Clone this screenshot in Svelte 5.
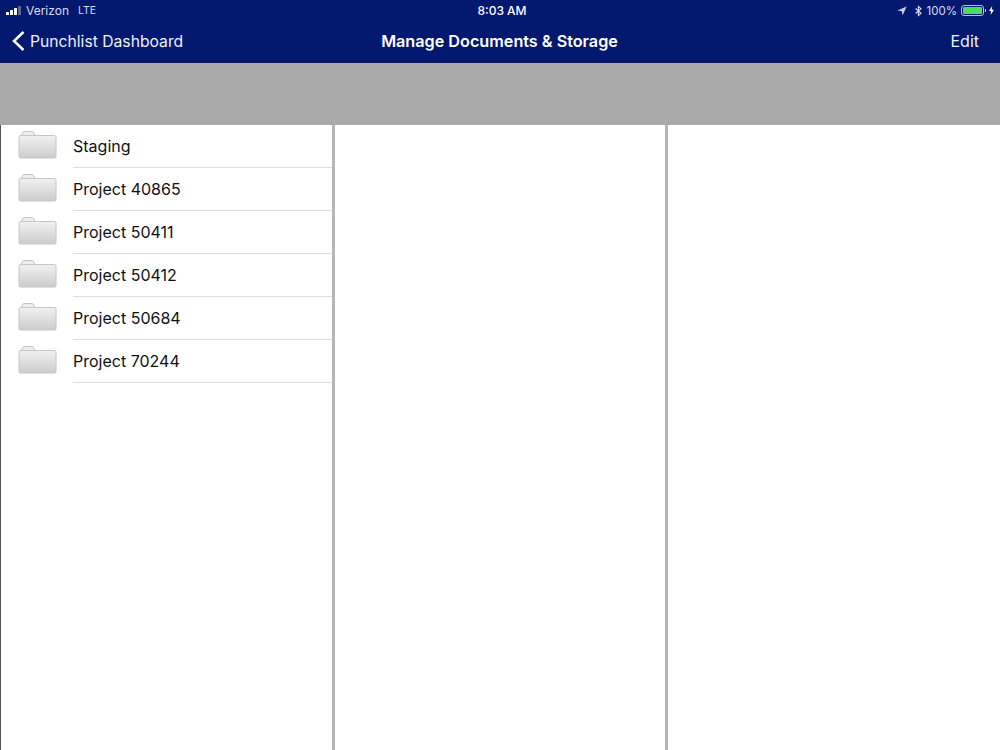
<script>
	const folders = ['Staging', 'Project 40865', 'Project 50411', 'Project 50412', 'Project 50684', 'Project 70244'];
</script>

<div class="screen">
	<header class="top">
		<div class="status">
			<div class="status-left">
				<span class="signal"><i class="b1"></i><i class="b2"></i><i class="b3"></i><i class="b4"></i></span>
				<span>Verizon</span>
				<span class="lte">LTE</span>
			</div>
			<div class="clock">8:03 AM</div>
			<div class="status-right">
				<svg width="10" height="10" viewBox="0 0 10 10"><path d="M9.6 .4 L.4 4.4 L4.8 5.2 L5.6 9.6 Z" fill="#c9cee6" /></svg>
				<svg class="bt" width="7" height="12" viewBox="0 0 7 11"><path d="M.6 3 L6 7.8 L3.4 10 V1 L6 3.2 L.6 8" fill="none" stroke="#d8dcf0" stroke-width="1.1" /></svg>
				<span class="pct">100%</span>
				<span class="battery"><span class="fill"></span></span>
				<span class="nub"></span>
				<svg class="bolt" width="5" height="9" viewBox="0 0 5 9"><path d="M3.2 0 L0 5 H2 L1.6 9 L5 3.8 H2.8 Z" fill="#fff" /></svg>
			</div>
		</div>
		<nav class="nav">
			<a class="back" href="#back">
				<svg width="14" height="22" viewBox="0 0 14 22"><path d="M12.5 2 L3 11 L12.5 20" fill="none" stroke="#fff" stroke-width="2.5" /></svg>
				<span class="back-label">Punchlist Dashboard</span>
			</a>
			<h1>Manage Documents &amp; Storage</h1>
			<a class="edit" href="#edit">Edit</a>
		</nav>
	</header>

	<div class="band"></div>

	<div class="columns">
		<ul class="col list">
			{#each folders as name}
				<li>
					<svg class="folder" width="40" height="30" viewBox="0 0 40 30">
						<defs>
							<linearGradient id="fg" x1="0" y1="0" x2="0" y2="1">
								<stop offset="0" stop-color="#f1f1f1" />
								<stop offset="1" stop-color="#cccccc" />
							</linearGradient>
						</defs>
						<path d="M2.5 6.5 L5 2 Q5.4 1.5 6 1.5 H14 Q14.8 1.5 15.2 2 L17.5 6.5" fill="#ededed" stroke="#c6c6c6" />
						<rect x="1" y="5.5" width="37" height="22.5" rx="1.5" fill="url(#fg)" stroke="#c6c6c6" />
					</svg>
					<span class="label">{name}</span>
				</li>
			{/each}
		</ul>
		<div class="col"></div>
		<div class="col"></div>
	</div>
</div>

<style>
	:global(body) {
		margin: 0;
		background: #fff;
	}

	.screen {
		width: 1000px;
		height: 750px;
		overflow: hidden;
		display: flex;
		flex-direction: column;
		font-family: Inter, 'Liberation Sans', sans-serif;
		color: #111;
	}

	.top {
		height: 63px;
		background: #03186f;
		color: #fff;
		border-bottom: 1px solid #0a1c5c;
		box-sizing: border-box;
	}

	.status {
		height: 21px;
		display: grid;
		grid-template-columns: 1fr auto 1fr;
		align-items: center;
		font-size: 12px;
		color: #d8dcf0;
		padding: 0 6px;
	}

	.status-left {
		display: flex;
		align-items: center;
		gap: 5px;
	}

	.lte {
		margin-left: 4px;
		font-size: 10.5px;
	}

	.signal {
		display: flex;
		align-items: flex-end;
		gap: 1px;
		height: 9px;
	}

	.signal i {
		width: 3px;
		background: #fff;
		border-radius: 0.5px;
	}

	.b1 { height: 3px; }
	.b2 { height: 5px; }
	.b3 { height: 7px; }
	.signal .b4 { height: 9px; background: #5a6699; }

	.clock {
		margin-left: 4px;
		color: #fff;
		font-weight: 500;
	}

	.status-right {
		display: flex;
		align-items: center;
		justify-content: flex-end;
	}

	.bt {
		margin-left: 8px;
	}

	.pct {
		margin-left: 5px;
		font-size: 11.5px;
	}

	.battery {
		width: 23px;
		height: 11px;
		margin-left: 4px;
		padding: 1px;
		border: 1px solid #b9c0dc;
		border-radius: 3px;
		display: flex;
		box-sizing: border-box;
	}

	.fill {
		flex: 1;
		background: #4cd964;
		border-radius: 1px;
	}

	.nub {
		width: 1px;
		height: 3px;
		margin-left: 1px;
		background: #b9c0dc;
	}

	.bolt {
		margin-left: 3px;
	}

	.nav {
		height: 41px;
		display: grid;
		grid-template-columns: 1fr auto 1fr;
		align-items: center;
		padding: 0 21px 2px 11px;
		box-sizing: border-box;
	}

	.back {
		display: flex;
		align-items: center;
		gap: 5px;
		text-decoration: none;
		font-size: 15.7px;
		color: #eef0f8;
	}

	.back-label {
		padding-top: 2px;
	}

	h1 {
		margin: 0 0 0 9px;
		font-size: 16.2px;
		font-weight: 600;
	}

	.edit {
		justify-self: end;
		color: #eef0f8;
		text-decoration: none;
		font-size: 16px;
	}

	.band {
		height: 62px;
		background: #aaaaaa;
	}

	.columns {
		flex: 1;
		display: grid;
		grid-template-columns: 334px 333px 332px;
		border-left: 1px solid #555;
	}

	.col {
		border-right: 3px solid #b6b6b6;
	}

	.col:last-child {
		border-right: 0;
	}

	.list {
		list-style: none;
		margin: 0;
		padding: 0;
	}

	.list li {
		height: 43px;
		display: flex;
		align-items: center;
		padding-left: 17px;
		box-sizing: border-box;
	}

	.folder {
		flex: none;
		margin-top: -4px;
	}

	.label {
		flex: 1;
		height: 100%;
		display: flex;
		align-items: center;
		margin-left: 15px;
		font-size: 16px;
		border-bottom: 1px solid #dcdcdc;
		box-sizing: border-box;
		padding-bottom: 1px;
	}
</style>
